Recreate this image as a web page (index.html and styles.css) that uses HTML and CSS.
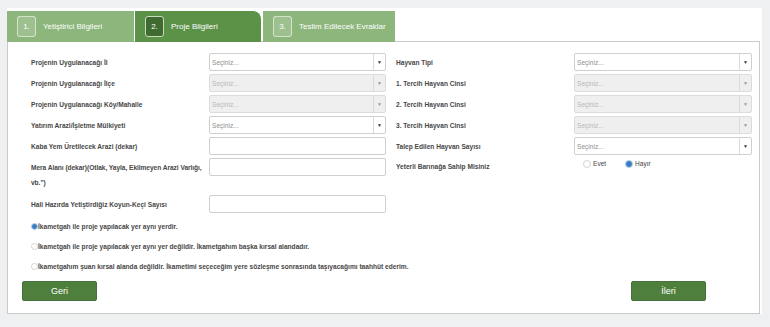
FILE: index.html
```html
<!DOCTYPE html>
<html lang="tr">
<head>
<meta charset="utf-8">
<link rel="stylesheet" href="styles.css">
</head>
<body>
<div class="wrap">
  <div class="tabs">
    <div class="tab light"><span class="num">1.</span><span class="tab-text">Yetiştirici Bilgileri</span></div>
    <div class="tab active"><span class="num">2.</span><span class="tab-text">Proje Bilgileri</span></div>
    <div class="tab light last"><span class="num">3.</span><span class="tab-text">Teslim Edilecek Evraklar</span></div>
  </div>
  <div class="panel">
    <div class="form">
      <div class="lbl">Projenin Uygulanacağı İl</div>
      <div class="sel"><span class="ph">Seçiniz...</span><span class="arr">▼</span></div>
      <div class="lbl rl">Hayvan Tipi</div>
      <div class="sel"><span class="ph">Seçiniz...</span><span class="arr">▼</span></div>

      <div class="lbl">Projenin Uygulanacağı İlçe</div>
      <div class="sel dis"><span class="ph">Seçiniz...</span><span class="arr">▼</span></div>
      <div class="lbl rl">1. Tercih Hayvan Cinsi</div>
      <div class="sel dis"><span class="ph">Seçiniz...</span><span class="arr">▼</span></div>

      <div class="lbl">Projenin Uygulanacağı Köy/Mahalle</div>
      <div class="sel dis"><span class="ph">Seçiniz...</span><span class="arr">▼</span></div>
      <div class="lbl rl">2. Tercih Hayvan Cinsi</div>
      <div class="sel dis"><span class="ph">Seçiniz...</span><span class="arr">▼</span></div>

      <div class="lbl">Yatırım Arazi/İşletme Mülkiyeti</div>
      <div class="sel"><span class="ph">Seçiniz...</span><span class="arr">▼</span></div>
      <div class="lbl rl">3. Tercih Hayvan Cinsi</div>
      <div class="sel dis"><span class="ph">Seçiniz...</span><span class="arr">▼</span></div>

      <div class="lbl">Kaba Yem Üretilecek Arazi (dekar)</div>
      <div class="inp"></div>
      <div class="lbl rl">Talep Edilen Hayvan Sayısı</div>
      <div class="sel"><span class="ph">Seçiniz...</span><span class="arr">▼</span></div>

      <div class="lbl multi">Mera Alanı (dekar)(Otlak, Yayla, Ekilmeyen Arazi Varlığı, vb.")</div>
      <div class="inp top"></div>
      <div class="lbl rl top2">Yeterli Barınağa Sahip Misiniz</div>
      <div class="rgroup">
        <span class="ropt"><span class="radio"></span>Evet</span>
        <span class="ropt"><span class="radio on"></span>Hayır</span>
      </div>

      <div class="lbl">Hali Hazırda Yetiştirdiğiz Koyun-Keçi Sayısı</div>
      <div class="inp"></div>
    </div>
    <div class="choices">
      <div class="choice"><span class="radio on"></span>İkametgah ile proje yapılacak yer aynı yerdir.</div>
      <div class="choice"><span class="radio"></span>İkametgah ile proje yapılacak yer aynı yer değildir. İkametgahım başka kırsal alandadır.</div>
      <div class="choice"><span class="radio"></span>İkametgahım şuan kırsal alanda değildir. İkametimi seçeceğim yere sözleşme sonrasında taşıyacağımı taahhüt ederim.</div>
    </div>
    <div class="actions">
      <button class="btn">Geri</button>
      <button class="btn">İleri</button>
    </div>
  </div>
</div>
</body>
</html>
```
FILE: styles.css
```css
* { box-sizing: border-box; }
html, body { margin: 0; padding: 0; }
body {
  background: #eef0f2;
  font-family: "Liberation Sans", Arial, sans-serif;
  width: 770px;
  height: 327px;
  overflow: hidden;
}
.wrap {
  margin: 8px 0 0 7px;
  width: 755px;
  background: #fff;
  padding-top: 3px;
}
.tabs {
  display: flex;
  height: 31px;
  position: relative;
  z-index: 1;
  margin-bottom: -1px;
}
.tab {
  display: flex;
  align-items: center;
  padding-left: 10px;
  color: #fff;
  font-size: 8px;
  height: 31px;
  margin-right: 1px;
}
.tab.light { background: #8db67c; }
.tab.active {
  background: #5c9148;
  border-top-right-radius: 8px;
  margin-right: 2px;
}
.tab:nth-child(1) { width: 127px; }
.tab:nth-child(2) { width: 126px; }
.tab.last { width: 132px; }
.num {
  width: 19px;
  height: 21px;
  border: 1px solid rgba(255,255,255,0.55);
  border-radius: 3px;
  background: rgba(255,255,255,0.15);
  display: flex;
  align-items: center;
  justify-content: center;
  font-size: 8px;
  margin-right: 7px;
}
.tab.active .num {
  background: #3f6a30;
  border-color: #c9dcbf;
}
.panel {
  width: 753px;
  border: 1px solid #c9cbc7;
  background: #fff;
  padding: 11px 0 12px 23px;
}
.form {
  display: grid;
  grid-template-columns: 178px 177px 188px 178px;
  row-gap: 3px;
}
.lbl {
  font-size: 6.6px;
  font-weight: bold;
  color: #474747;
  align-self: center;
  line-height: 15px;
}
.lbl.rl { padding-left: 10px; }
.lbl.multi {
  align-self: start;
  padding: 2px 0 2px 0;
  letter-spacing: -0.05px;
}
.lbl.top2 { align-self: start; padding-top: 1px; }
.sel, .inp {
  height: 18px;
  border: 1px solid #cfcfcf;
  border-radius: 2px;
  background: #fff;
  display: flex;
  align-items: center;
}
.inp.top { align-self: start; }
.sel.dis { background: #efefef; border-color: #dcdcdc; }
.ph {
  flex: 1;
  font-size: 6.6px;
  color: #8f8f8f;
  padding-left: 2px;
}
.sel.dis .ph { color: #b9b9b9; }
.arr {
  width: 12px;
  height: 16px;
  border-left: 1px solid #dadada;
  font-size: 5px;
  color: #333;
  display: flex;
  align-items: center;
  justify-content: center;
}
.sel.dis .arr { color: #999; }
.rgroup {
  align-self: start;
  display: flex;
  padding-left: 9px;
  padding-top: 1px;
  font-size: 6.6px;
  color: #444;
  line-height: 9px;
}
.ropt {
  display: flex;
  align-items: center;
  width: 42px;
}
.radio {
  width: 8px;
  height: 8px;
  border-radius: 50%;
  border: 1px solid #d4d4d4;
  background: #fff;
  margin-right: 2px;
  flex: none;
}
.radio.on {
  background: #3a7cc4;
  border: 1px solid #bcd3ea;
}
.choices { margin-top: 3px; }
.choice {
  height: 20px;
  display: flex;
  align-items: center;
  font-size: 6.6px;
  font-weight: bold;
  color: #474747;
  padding-left: 0;
}
.choice .radio { margin-right: 0; width: 7px; height: 7px; }
.actions {
  display: flex;
  justify-content: space-between;
  margin-top: 5px;
  margin-left: -9px;
  width: 684px;
}
.btn {
  width: 75px;
  height: 20px;
  background: #4f7f3d;
  border: 1px solid #45713a;
  border-radius: 2px;
  color: #fff;
  font-family: "Liberation Sans", Arial, sans-serif;
  font-size: 9px;
  padding: 0;
}
```
